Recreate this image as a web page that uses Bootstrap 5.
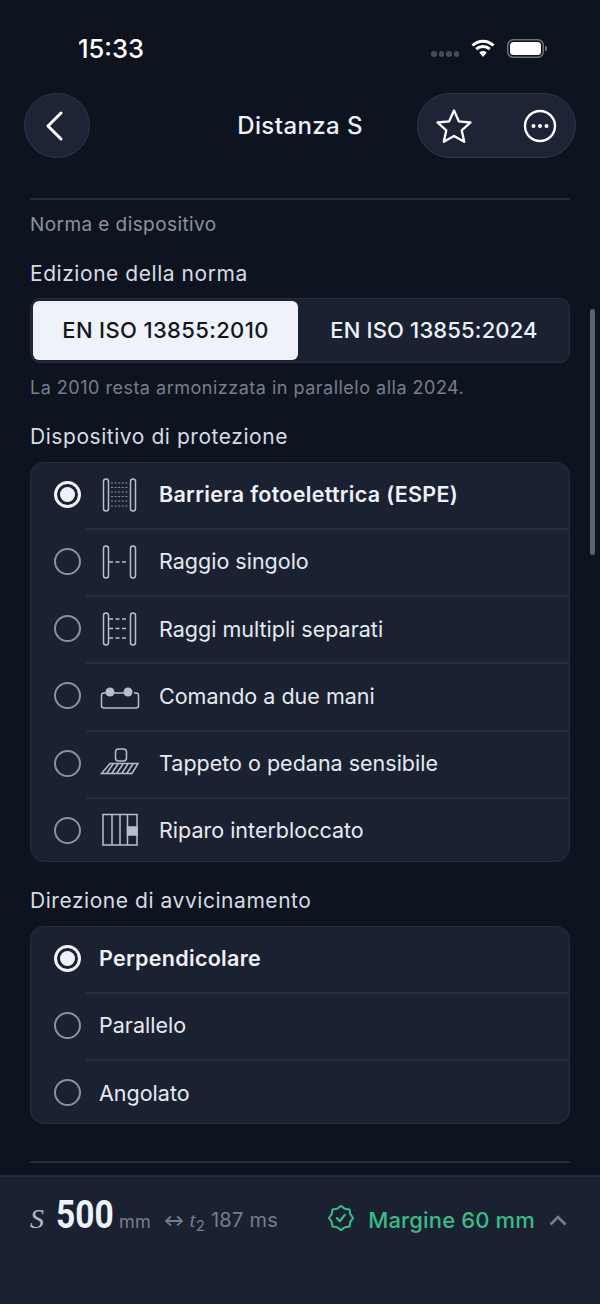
<!DOCTYPE html>
<html lang="en">
<head>
    <meta charset="UTF-8">
    <meta name="viewport" content="width=device-width, initial-scale=1.0">
    <title>Distanza S</title>
    <link href="https://cdn.jsdelivr.net/npm/bootstrap@5.3.3/dist/css/bootstrap.min.css" rel="stylesheet">
    <style>
        html, body { height: 1304px; overflow: hidden; }
        body { background: #0d1420; color: #eef1f7; font-family: "Inter", "Liberation Sans", sans-serif; position: relative; }
        .app-screen { height: 1304px; }
        .status-bar { height: 93px; padding: 35px 53px 0 78px; }
        .status-time { font-size: 25.500px; font-weight: 500; line-height: 28px; color: #fff; }
        .status-icons { gap: 12px; padding-top: 4px; }
        .signal-dots { gap: 2px; margin-top: 11px; }
        .signal-dots i { width: 5.500px; height: 5.500px; border-radius: 50%; background: #454b57; display: block; }
        .nav-head { height: 65px; padding: 0 24px; position: relative; }
        .glass-btn { background: #1c2435; border: 1px solid #2c3750; height: 65px; border-radius: 33px; color: #fff; }
        .back-btn { width: 66px; padding: 0 4px 0 0; }
        .action-group { width: 159px; padding: 0 18px; }
        .head-title { font-size: 24px; font-weight: 500; letter-spacing: .4px; left: 0; right: 0; top: 17px; text-align: center; line-height: 32px; pointer-events: none; }
        .scroll-area { padding: 0 30px; flex: 1 1 auto; min-height: 0; overflow: hidden; }
        .rule-line { height: 2px; background: #252c3b; }
        .rule-top { margin-top: 40px; }
        .rule-end { margin-top: 37px; }
        .section-title { font-size: 19px; letter-spacing: .42px; line-height: 24px; color: #8a92a0; margin-top: 13px; }
        .field-title { font-size: 21px; letter-spacing: .55px; line-height: 26px; color: #d7dbe3; margin-top: 24px; }
        .field-title-low { margin-top: 26px; }
        .norm-switch { height: 65px; background: #1a2232; border: 1px solid #252e40; border-radius: 10px; padding: 2px; margin-top: 11px; }
        .norm-opt { flex: 1 1 0; font-size: 22px; letter-spacing: .15px; padding-left: 3px; font-weight: 500; display: flex; align-items: center; justify-content: center; border-radius: 6px; color: #eef1f7; }
        .norm-opt.is-on { flex: 0 0 265px; padding-left: 0; letter-spacing: .35px; background: #eff2f9; color: #111722; }
        .hint-text { font-size: 18px; letter-spacing: .5px; line-height: 24px; color: #767e8c; margin-top: 13px; }
        .choice-list { background: #1a2232; border: 1px solid #252e40; border-radius: 14px; margin-top: 12px; overflow: hidden; }
        .choice-row { height: 67.200px; padding-left: 23px; display: flex; align-items: center; position: relative; font-size: 21.500px; color: #e6e9ef; }
        .choice-row:first-child { height: 65px; padding-bottom: 2px; }
        .choice-row:last-child { height: 64.200px; padding-top: 3px; }
        .choice-row + .choice-row::before { content: ""; position: absolute; left: 55px; right: 0; top: 0; height: 2px; background: #252e40; }
        .choice-row.is-on { font-weight: 600; letter-spacing: .3px; color: #eef1f7; }
        .radio-dot { width: 27px; height: 27px; border: 2px solid #8c929d; border-radius: 50%; flex: none; margin-right: 18px; }
        .is-on .radio-dot { border: 3px solid #eff2f9; padding: 3px; }
        .is-on .radio-dot::after { content: ""; display: block; width: 100%; height: 100%; background: #eff2f9; border-radius: 50%; }
        .row-icon { width: 38px; height: 34px; flex: none; margin-right: 22px; color: #b8bec9; overflow: visible; }
        .bottom-bar { height: 129px; background: #1a2232; border-top: 2px solid #252e40; padding: 21px 33px 0 30px; flex: none; }
        .s-symbol { font-family: "Liberation Serif", serif; font-style: italic; font-size: 28px; color: #b6bbc5; width: 26px; line-height: 42px; }
        .s-value { font-family: "Roboto", sans-serif; font-size: 39px; font-weight: 700; color: #eff2f9; line-height: 38px; transform: scaleX(.86); transform-origin: left; width: 55px; margin-top: -2px; }
        .s-unit { font-size: 18px; letter-spacing: .3px; color: #767e8c; line-height: 40px; margin-top: 4px; }
        .s-time { font-size: 20px; margin-left: 12px; margin-top: 2px; }
        .swap-mark { font-size: 16px; font-weight: 700; letter-spacing: 0; margin-right: 5px; }
        .t-symbol { font-family: "Liberation Serif", serif; font-style: italic; font-size: 22px; letter-spacing: 0; margin-right: 6px; }
        .t-symbol sub { font-family: "Inter", sans-serif; font-style: normal; font-size: 15px; }
        .margin-badge { margin: 7px 14px 0 0; }
        .margin-text { font-size: 22px; letter-spacing: .15px; font-weight: 500; color: #3dba86; line-height: 40px; margin-top: 2px; }
        .margin-chev { margin: 14px 0 0 14px; }
        .scroll-thumb { position: absolute; left: 590px; top: 309px; width: 5px; height: 246px; border-radius: 3px; background: #5c6370; }
    </style>
</head>
<body>
    <div class="app-screen d-flex flex-column">
        <div class="status-bar d-flex justify-content-between align-items-start">
            <div class="status-time">15:33</div>
            <div class="status-icons d-flex align-items-center">
                <div class="signal-dots d-flex"><i></i><i></i><i></i><i></i></div>
                <svg width="24" height="19" viewBox="0 0 24 19"><path d="M1.500 6.500a15 15 0 0 1 21 0M5.200 10.200a10 10 0 0 1 13.600 0" fill="none" stroke="#fff" stroke-width="3"/><path d="M8.300 13.400a5.500 5.500 0 0 1 7.400 0L12 18z" fill="#fff"/></svg>
                <svg width="40" height="19" viewBox="0 0 40 19"><rect x=".75" y=".75" width="35.500" height="17.500" rx="5.500" fill="none" stroke="#6d717a" stroke-width="1.500"/><rect x="3" y="3" width="31" height="13" rx="3.500" fill="#fff"/><path d="M38 7a2.500 2.500 0 0 1 0 5z" fill="#6d717a"/></svg>
            </div>
        </div>
        <div class="nav-head d-flex justify-content-between">
            <button class="glass-btn back-btn d-flex align-items-center justify-content-center" aria-label="Indietro">
                <svg width="22" height="32" viewBox="0 0 22 32"><path d="M17 3 4 16l13 13" fill="none" stroke="#fff" stroke-width="3" stroke-linecap="round" stroke-linejoin="round"/></svg>
            </button>
            <div class="head-title position-absolute">Distanza S</div>
            <div class="glass-btn action-group d-flex align-items-center justify-content-between">
                <svg width="36" height="36" viewBox="0 0 36 36"><path d="m18 2.500 4.800 10.800 11.700 1.200-8.800 7.800 2.500 11.500L18 28l-10.200 5.800 2.500-11.500-8.800-7.800 11.700-1.200z" fill="none" stroke="#fff" stroke-width="2.300" stroke-linejoin="round"/></svg>
                <svg width="34" height="34" viewBox="0 0 34 34"><circle cx="17" cy="17" r="15" fill="none" stroke="#fff" stroke-width="2.400"/><circle cx="10.500" cy="17" r="2" fill="#fff"/><circle cx="17" cy="17" r="2" fill="#fff"/><circle cx="23.500" cy="17" r="2" fill="#fff"/></svg>
            </div>
        </div>
        <div class="scroll-area">
            <div class="rule-line rule-top"></div>
            <div class="section-title">Norma e dispositivo</div>
            <div class="field-title">Edizione della norma</div>
            <div class="norm-switch d-flex">
                <div class="norm-opt is-on">EN ISO 13855:2010</div>
                <div class="norm-opt">EN ISO 13855:2024</div>
            </div>
            <div class="hint-text">La 2010 resta armonizzata in parallelo alla 2024.</div>
            <div class="field-title">Dispositivo di protezione</div>
            <div class="choice-list">
                <div class="choice-row is-on"><span class="radio-dot"></span>
                    <svg class="row-icon" viewBox="0 0 38 34" fill="none" stroke="currentColor" stroke-width="1.500"><rect x="4.500" y="1" width="5" height="32" rx="2.500"/><rect x="31.500" y="1" width="5" height="32" rx="2.500"/><path d="M12 5h17M12 9.500h17M12 14h17M12 18.500h17M12 23h17M12 28h17" stroke-dasharray="2 1.600" stroke-width="1.200" opacity=".7"/></svg>
                    Barriera fotoelettrica (ESPE)</div>
                <div class="choice-row"><span class="radio-dot"></span>
                    <svg class="row-icon" viewBox="0 0 38 34" fill="none" stroke="currentColor" stroke-width="1.500"><rect x="4.500" y="1" width="5" height="32" rx="2.500"/><rect x="31.500" y="1" width="5" height="32" rx="2.500"/><path d="M10 17h19" stroke-dasharray="4 2.500"/></svg>
                    Raggio singolo</div>
                <div class="choice-row"><span class="radio-dot"></span>
                    <svg class="row-icon" viewBox="0 0 38 34" fill="none" stroke="currentColor" stroke-width="1.500"><rect x="4.500" y="1" width="5" height="32" rx="2.500"/><rect x="31.500" y="1" width="5" height="32" rx="2.500"/><path d="M10 7h19M10 16.500h19M10 26h19" stroke-dasharray="4 2.500"/></svg>
                    Raggi multipli separati</div>
                <div class="choice-row"><span class="radio-dot"></span>
                    <svg class="row-icon" viewBox="0 0 38 34" fill="none" stroke="currentColor" stroke-width="1.500"><path d="M7 14H5a2.500 2.500 0 0 0-2.500 2.500v10A2.500 2.500 0 0 0 5 29h32a2.500 2.500 0 0 0 2.500-2.500v-10A2.500 2.500 0 0 0 37 14h-2M15 14h10"/><circle cx="11" cy="13" r="4.500" fill="currentColor" stroke="none"/><circle cx="29" cy="13" r="4.500" fill="currentColor" stroke="none"/></svg>
                    Comando a due mani</div>
                <div class="choice-row"><span class="radio-dot"></span>
                    <svg class="row-icon" viewBox="0 0 38 34" fill="none" stroke="currentColor" stroke-width="1.500"><rect x="16.500" y="3" width="11" height="12" rx="3"/><path d="M11 17.500h28l-6 10H2.500zM14 18l-6 9M19 18l-6 9M24 18l-6 9M29 18l-6 9M34 18l-6 9"/></svg>
                    Tappeto o pedana sensibile</div>
                <div class="choice-row"><span class="radio-dot"></span>
                    <svg class="row-icon" viewBox="0 0 38 34" fill="none" stroke="currentColor" stroke-width="1.500"><rect x="4" y="1.500" width="34" height="30.500"/><path d="M13 1.500V32M21 1.500V32M28.500 1.500V32"/><rect x="28.500" y="14" width="9.500" height="8" fill="currentColor"/></svg>
                    Riparo interbloccato</div>
            </div>
            <div class="field-title field-title-low">Direzione di avvicinamento</div>
            <div class="choice-list">
                <div class="choice-row is-on"><span class="radio-dot"></span>Perpendicolare</div>
                <div class="choice-row"><span class="radio-dot"></span>Parallelo</div>
                <div class="choice-row"><span class="radio-dot"></span>Angolato</div>
            </div>
            <div class="rule-line rule-end"></div>
        </div>
        <div class="bottom-bar d-flex align-items-start">
            <div class="s-symbol">S</div>
            <div class="s-value">500</div>
            <div class="s-unit ms-2">mm</div>
            <div class="s-unit s-time d-flex align-items-center flex-grow-1">
                <span class="swap-mark">↔</span><span class="t-symbol">t<sub>2</sub></span>187 ms
            </div>
            <svg class="margin-badge" width="26" height="26" viewBox="0 0 28 28" fill="none" stroke="#3dba86" stroke-width="2.200" stroke-linejoin="round" stroke-linecap="round"><path d="M14 1 18.130 4.020 23.190 4.810 23.980 9.870 27 14 23.980 18.130 23.190 23.190 18.130 23.980 14 27 9.870 23.980 4.810 23.190 4.020 18.130 1 14 4.020 9.870 4.810 4.810 9.870 4.020z"/><path d="m9.500 14 3.200 3.500 5.500-7"/></svg>
            <div class="margin-text">Margine 60 mm</div>
            <svg class="margin-chev" width="18" height="18" viewBox="0 0 18 18"><path d="m1.500 12.500 7.500-7.500 7.500 7.500" fill="none" stroke="#767e8c" stroke-width="2.600"/></svg>
        </div>
    </div>
    <div class="scroll-thumb"></div>
    <script src="https://cdn.jsdelivr.net/npm/bootstrap@5.3.3/dist/js/bootstrap.bundle.min.js"></script>
</body>
</html>
